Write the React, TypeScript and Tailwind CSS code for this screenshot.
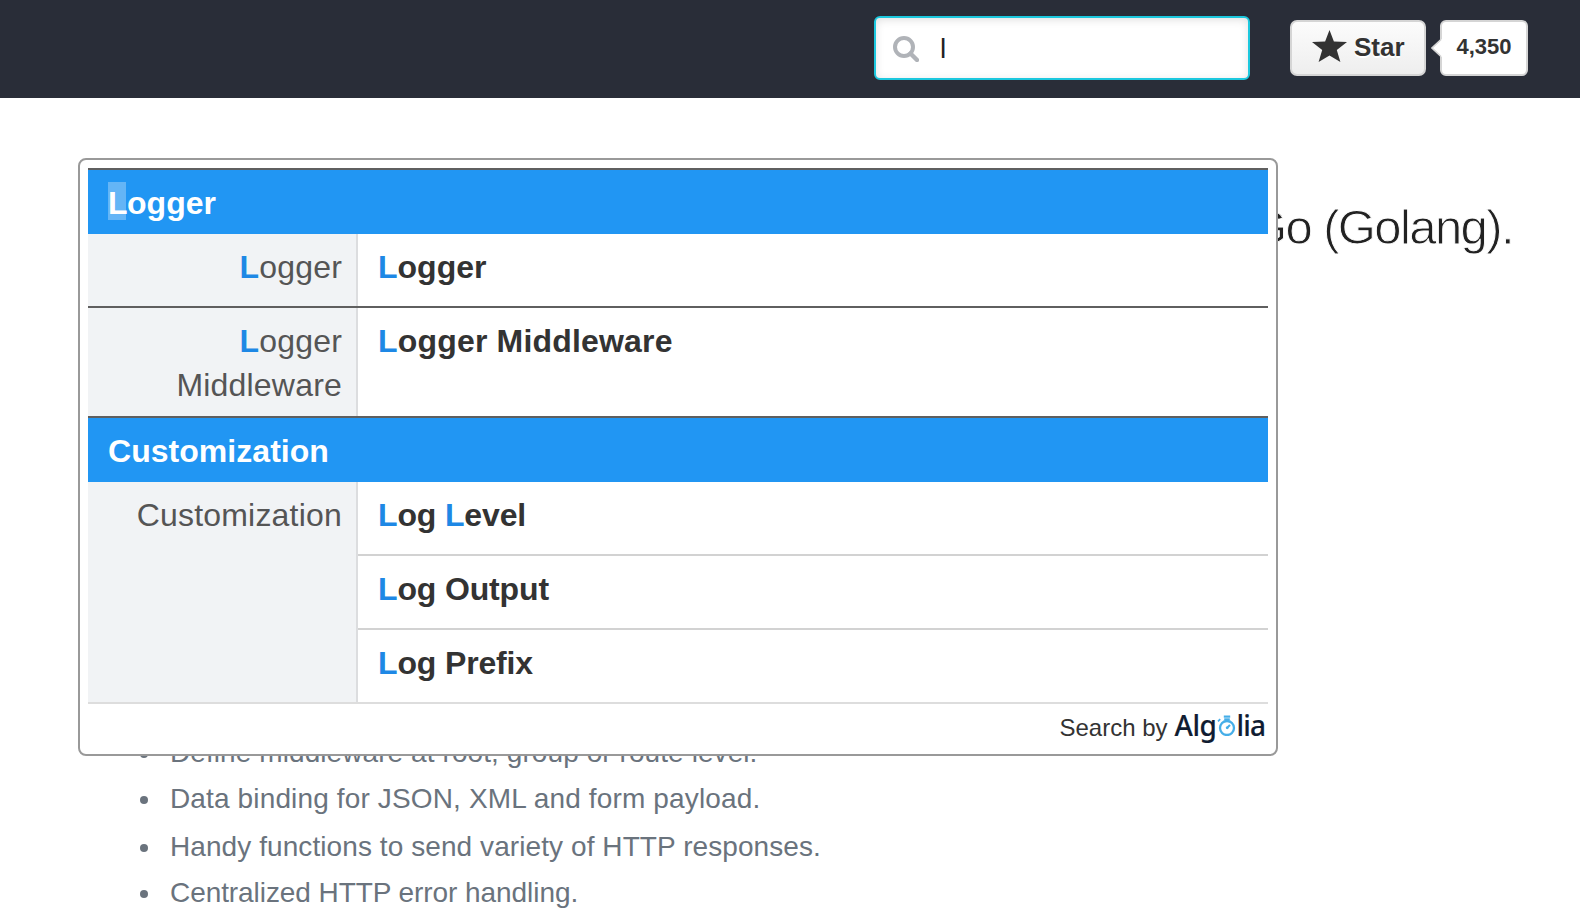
import type { ReactNode } from "react";

const features = [
  { text: "Define middleware at root, group or route level.", style: "h-[46px] tracking-[0.08px]" },
  { text: "Data binding for JSON, XML and form payload.", style: "h-[48px] tracking-[0.14px]" },
  { text: "Handy functions to send variety of HTTP responses.", style: "h-[46px] tracking-[0.08px]" },
  { text: "Centralized HTTP error handling.", style: "h-[46px] tracking-[-0.07px]" },
];

function Hit({ children }: { children: ReactNode }) {
  return <span className="font-bold text-[#1e88e5]">{children}</span>;
}

function SearchBox() {
  return (
    <div className="flex h-16 w-[376px] items-center rounded-[6px] border-2 border-[#1cc8de] bg-white pl-[17px] pt-0.5 shadow-[inset_0_2px_8px_rgba(0,0,0,0.12)]">
      <svg width="26" height="26" viewBox="0 0 26 26" fill="none" stroke="#b0b3b8">
        <circle cx="11" cy="11" r="9" strokeWidth="4" />
        <path d="M17.5 17.5 L24 24" strokeWidth="4.4" strokeLinecap="round" />
      </svg>
      <span className="ml-[21px] text-[28px] leading-8 text-[#222]">l</span>
    </div>
  );
}

function StarButton() {
  return (
    <div className="flex h-14 w-[136px] items-center rounded-[7px] border-2 border-[#d5d5d5] bg-linear-to-b from-[#fcfcfc] to-[#eeeeee] pb-[3px] pl-5 font-bold text-[#333]">
      <svg className="-mt-px" width="35" height="32" viewBox="0 0 35 32" fill="#333">
        <path d="M17.5 0 L21.9 11.6 L35 12 L24.8 20 L28.4 32 L17.5 25.6 L6.6 32 L10.2 20 L0 12 L13.1 11.6 Z" />
      </svg>
      <span className="ml-[7px] text-[26px] leading-8 [text-shadow:0_2px_0_#fff]">Star</span>
    </div>
  );
}

function StarCount() {
  return (
    <div className="relative flex h-14 w-[88px] items-center justify-center rounded-[6px] border-2 border-[#d5d5d5] bg-white pb-1 text-[22px] font-bold text-[#333]">
      <svg className="absolute -left-[11px] top-4" width="12" height="20" viewBox="0 0 12 20">
        <path d="M12 0 L1 10 L12 20 Z" fill="#fff" />
        <path d="M10 1.5 L1 10 L10 18.5" fill="none" stroke="#d5d5d5" strokeWidth="1.6" />
      </svg>
      4,350
    </div>
  );
}

function GroupTitle({ children }: { children: ReactNode }) {
  return (
    <div className="h-[66px] border-t-2 border-[#5f5f5f] bg-[#2196f3] pl-5 pt-[11px] font-bold leading-[44px] tracking-[0.04px] text-white">
      {children}
    </div>
  );
}

function Subject({ children }: { children?: ReactNode }) {
  return (
    <div className="w-[270px] shrink-0 border-r-2 border-[#dcdddf] bg-[#f1f3f5] pr-[14px] pt-[11px] text-right leading-[44px] tracking-[0.2px] text-[#555]">
      {children}
    </div>
  );
}

function Result({ children }: { children: ReactNode }) {
  return <div className="h-[72px] pl-5 pt-[11px] font-bold leading-[44px] text-[#333]">{children}</div>;
}

function AlgoliaLogo() {
  return (
    <span className="flex items-baseline font-['Noto_Sans',sans-serif] text-[28px] font-medium leading-9 text-[#101c31] [-webkit-text-stroke:0.15px_#101c31]">
      <span className="tracking-[-0.4px]">Alg</span>
      <svg className="-mb-px" width="20" height="21" viewBox="0 0 20 21" fill="none" stroke="#46aee8">
        <circle cx="10" cy="13" r="7" strokeWidth="2.3" />
        <path d="M6.8 1.6 H13.2" strokeWidth="2.2" />
        <path d="M7.2 4.2 H12.8" strokeWidth="1.8" />
        <path d="M1 6.4 L3.2 4.2" strokeWidth="1.7" />
        <circle cx="10.2" cy="12.8" r="1.4" fill="#46aee8" stroke="none" />
        <path d="M10.2 12.8 L13 10" strokeWidth="2.1" />
      </svg>
      <span className="tracking-[-0.9px]">lia</span>
    </span>
  );
}

function Dropdown() {
  return (
    <div className="absolute left-[78px] top-[158px] h-[598px] w-[1200px] rounded-lg border-2 border-[#999] bg-white p-2 text-[32px]">
      <GroupTitle>
        <span className="mr-px inline-block h-[38px] w-[18px] bg-white/30 leading-[42px]">L</span>ogger
      </GroupTitle>
      <div className="flex">
        <Subject><Hit>L</Hit>ogger</Subject>
        <Result><Hit>L</Hit>ogger</Result>
      </div>
      <div className="flex h-[110px] border-t-2 border-[#5f5f5f]">
        <Subject><Hit>L</Hit>ogger<br />Middleware</Subject>
        <Result>
          <span className="tracking-[0.18px]"><Hit>L</Hit>ogger Middleware</span>
        </Result>
      </div>
      <GroupTitle>Customization</GroupTitle>
      <div className="flex border-b-2 border-[#ddd]">
        <Subject>Customization</Subject>
        <div className="grow divide-y-2 divide-[#d2d2d2] tracking-[-0.15px]">
          <div><Result><Hit>L</Hit>og <Hit>L</Hit>evel</Result></div>
          <div><Result><Hit>L</Hit>og Output</Result></div>
          <div><Result><Hit>L</Hit>og Prefix</Result></div>
        </div>
      </div>
      <div className="flex items-baseline justify-end gap-[7px] pr-[3px] pt-[3px] text-[24px] text-[#333]">
        <span>Search by</span>
        <AlgoliaLogo />
      </div>
    </div>
  );
}

export default function App() {
  return (
    <div className="relative h-[908px] w-[1580px] overflow-hidden bg-white font-['Liberation_Sans',Arial,sans-serif]">
      <header className="flex h-[98px] items-start justify-end bg-[#292d38] pr-[52px]">
        <div className="mr-10 mt-4"><SearchBox /></div>
        <div className="mr-[14px] mt-5"><StarButton /></div>
        <div className="mt-5"><StarCount /></div>
      </header>
      <main>
        <h1 className="whitespace-nowrap pr-[67px] pt-[95px] text-right text-[49px] leading-[68px] tracking-[-1.6px] text-[#222] [-webkit-text-stroke:0.9px_white]">
          Go (Golang).
        </h1>
        <ul className="mt-[469px] pl-[140px] text-[28px] leading-[46px] text-[#6a737d]">
          {features.map(({ text, style }) => (
            <li key={text} className={`flex items-start ${style}`}>
              <span className="mr-[22px] mt-5 size-2 rounded-full bg-[#6a737d]" />
              {text}
            </li>
          ))}
        </ul>
      </main>
      <Dropdown />
    </div>
  );
}
